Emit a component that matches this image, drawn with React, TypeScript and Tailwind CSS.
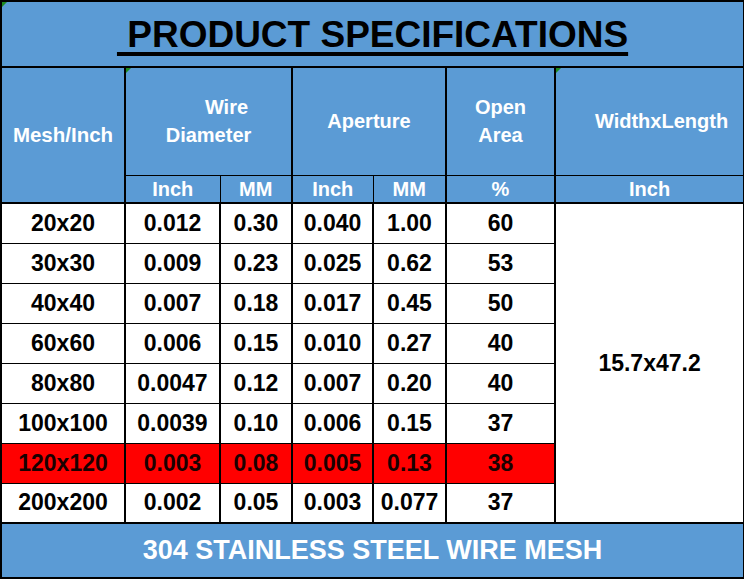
const ROWS = [
  ['20x20', '0.012', '0.30', '0.040', '1.00', '60'],
  ['30x30', '0.009', '0.23', '0.025', '0.62', '53'],
  ['40x40', '0.007', '0.18', '0.017', '0.45', '50'],
  ['60x60', '0.006', '0.15', '0.010', '0.27', '40'],
  ['80x80', '0.0047', '0.12', '0.007', '0.20', '40'],
  ['100x100', '0.0039', '0.10', '0.006', '0.15', '37'],
  ['120x120', '0.003', '0.08', '0.005', '0.13', '38'],
  ['200x200', '0.002', '0.05', '0.003', '0.077', '37'],
];

const HIGHLIGHT = '120x120';

function Marker() {
  return (
    <span className="absolute left-0 top-0 w-0 h-0 border-t-[5px] border-r-[5px] border-t-[#1f8a1f] border-r-transparent" />
  );
}

export default function App() {
  return (
    <div className="w-[744px] h-[581px] bg-white font-['Liberation_Sans',Arial,sans-serif]">
      <table className="w-[743px] table-fixed border-collapse border-2 border-black">
        <colgroup>
          <col className="w-[124px]" />
          <col className="w-[95px]" />
          <col className="w-[72px]" />
          <col className="w-[81px]" />
          <col className="w-[73px]" />
          <col className="w-[109px]" />
          <col className="w-[189px]" />
        </colgroup>
        <tbody>
          <tr className="h-[66px]">
            <td colSpan={7} className="relative bg-[#5b9bd5] border-2 border-black text-center p-0 leading-none">
              <Marker />
              <span className="text-[37px] font-bold text-black underline decoration-[4px] underline-offset-[5px] [text-decoration-skip-ink:none] whitespace-pre">
                {' PRODUCT SPECIFICATIONS'}
              </span>
            </td>
          </tr>

          <tr className="h-[108px] text-white font-bold text-[20px] leading-[28px]">
            <td rowSpan={2} className="bg-[#5b9bd5] border-2 border-black text-center p-0 text-[20.5px]">
              Mesh/Inch
            </td>
            <td colSpan={2} className="relative bg-[#5b9bd5] border-x-2 border-t-2 border-b border-black text-center p-0">
              <Marker />
              <div className="pl-[36px]">Wire</div>
              <div>Diameter</div>
            </td>
            <td colSpan={2} className="bg-[#5b9bd5] border-x-2 border-t-2 border-b border-black text-center p-0">
              Aperture
            </td>
            <td className="bg-[#5b9bd5] border-x-2 border-t-2 border-b border-black text-center p-0">
              <div>Open</div>
              <div>Area</div>
            </td>
            <td className="relative bg-[#5b9bd5] border-x-2 border-t-2 border-b border-black text-center p-0">
              <Marker />
              <span className="pl-[24px]">WidthxLength</span>
            </td>
          </tr>

          <tr className="h-[28px] text-white font-bold text-[20px] leading-[20px] text-center">
            <td className="bg-[#5b9bd5] border-l-2 border-r border-t border-b-2 border-black p-0">Inch</td>
            <td className="bg-[#5b9bd5] border-r-2 border-t border-b-2 border-black p-0">MM</td>
            <td className="bg-[#5b9bd5] border-l-2 border-r border-t border-b-2 border-black p-0">Inch</td>
            <td className="bg-[#5b9bd5] border-r-2 border-t border-b-2 border-black p-0">MM</td>
            <td className="bg-[#5b9bd5] border-x-2 border-t border-b-2 border-black p-0">%</td>
            <td className="bg-[#5b9bd5] border-x-2 border-t border-b-2 border-black p-0">Inch</td>
          </tr>

          {ROWS.map((row, i) => {
            const hot = row[0] === HIGHLIGHT;
            return (
              <tr key={row[0]} className={`h-[40px] text-[23px] leading-none font-bold text-center ${hot ? 'bg-[#ff0000] text-[#1a0000]' : 'bg-white text-black'}`}>
                {row.map((cell, j) => (
                  <td
                    key={j}
                    className={`border-y border-black p-0 ${j === 2 || j === 4 ? 'border-l' : 'border-l-2'} border-r-2`}
                  >
                    {cell}
                  </td>
                ))}
                {i === 0 && (
                  <td rowSpan={ROWS.length} className="bg-white text-black border-x-2 border-b-2 border-black p-0">
                    15.7x47.2
                  </td>
                )}
              </tr>
            );
          })}

          <tr className="h-[55px]">
            <td colSpan={7} className="bg-[#5b9bd5] border-2 border-black text-center text-white font-bold text-[27px] leading-none p-0">
              304 STAINLESS STEEL WIRE MESH
            </td>
          </tr>
        </tbody>
      </table>
    </div>
  );
}
